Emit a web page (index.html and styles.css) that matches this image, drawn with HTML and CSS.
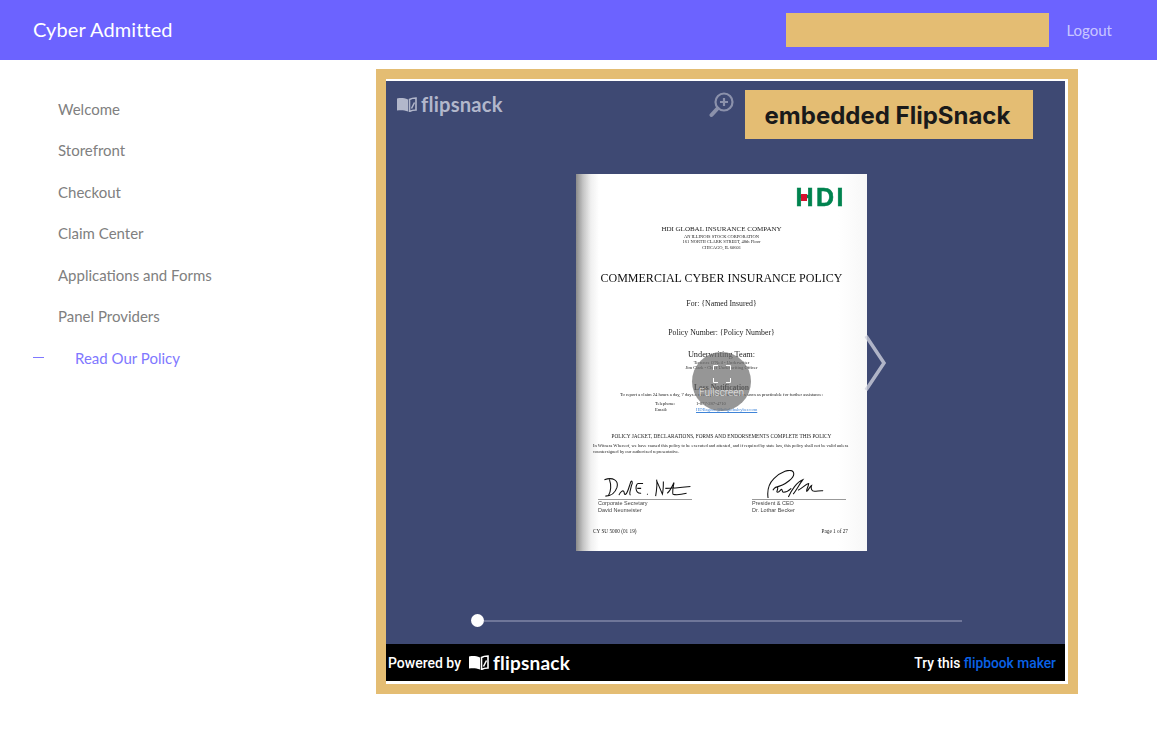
FILE: index.html
```html
<!DOCTYPE html>
<html lang="en">
<head>
<meta charset="utf-8">
<title>Cyber Admitted</title>
<link rel="stylesheet" href="styles.css">
</head>
<body>
<header class="topbar">
  <div class="brand">Cyber Admitted</div>
  <div class="topbar-right">
    <div class="redacted"></div>
    <a class="logout">Logout</a>
  </div>
</header>
<div class="layout">
  <nav class="sidebar">
    <a class="nav-item">Welcome</a>
    <a class="nav-item">Storefront</a>
    <a class="nav-item">Checkout</a>
    <a class="nav-item">Claim Center</a>
    <a class="nav-item">Applications and Forms</a>
    <a class="nav-item">Panel Providers</a>
    <a class="nav-item active"><span class="dash"></span>Read Our Policy</a>
  </nav>
  <main class="frame">
    <div class="frame-inner">
      <div class="viewer">
        <div class="stage">
          <div class="toolbar">
            <div class="fs-logo muted">
              <svg class="book" viewBox="0 0 20 15"><path class="book-left" d="M0 1.500C4 .8 7 1 11 2.500V14.500C7 13 4 13 0 13.500z"/><path class="book-right" d="M12.500 2.500c2-1.300 4-1.500 6.500-1.500V13c-2.500 0-4.500.3-6.500 1.500z"/><path class="book-pen" d="M14.500 11.500l3-6"/></svg>
              <span class="fs-word top">flipsnack</span>
            </div>
            <svg class="zoom-icon" viewBox="0 0 26 26"><circle cx="15" cy="10" r="8.500"/><path d="M15 6v8M11 10h8"/><path class="zoom-handle" d="M8.500 16.500L2.500 23"/></svg>
          </div>
          <article class="page">
            <div class="hdi"><span class="hdi-h">H<i></i></span><span>DI</span></div>
            <p class="co">HDI GLOBAL INSURANCE COMPANY</p>
            <p class="sub">AN ILLINOIS STOCK CORPORATION</p>
            <p class="sub">161 NORTH CLARK STREET, 48th Floor</p>
            <p class="sub">CHICAGO, IL 60601</p>
            <h1 class="title">COMMERCIAL CYBER INSURANCE POLICY</h1>
            <p class="field for">For: {Named Insured}</p>
            <p class="field num">Policy Number: {Policy Number}</p>
            <p class="head uw">Underwriting Team:</p>
            <p class="small">Terrence O'Neil - Underwriter</p>
            <p class="small">Jim Clark - Chief Underwriting Officer</p>
            <p class="head loss">Loss Notification</p>
            <p class="small">To report a claim 24 hours a day, 7 days a week, please contact us as soon as practicable for further assistance:</p>
            <div class="contact first"><span>Telephone:</span><span>1-877-287-4710</span></div>
            <div class="contact"><span>Email:</span><span class="mail">HDIlagoon@hdiglobalcyber.com</span></div>
            <p class="jacket">POLICY JACKET, DECLARATIONS, FORMS AND ENDORSEMENTS COMPLETE THIS POLICY</p>
            <p class="witness">In Witness Whereof, we have caused this policy to be executed and attested, and if required by state law, this policy shall not be valid unless countersigned by our authorized representative.</p>
            <div class="signs">
              <div class="sign">
                <svg class="sig" viewBox="0 0 94 30"><path d="M10 9c2 6 2 13-1 18M5 10c9-3 15 1 13 8-2 6-7 9-12 9M20 26c2-4 4-5 5-4s0 4 2 3 3-6 5-12c1-3 3-1 1 3-1 5-3 9-1 10M40 14c-3 0-4 11 3 10M39 19h4M40 14h5M49 25h1M59 10c1 5 0 11-1 17M59 11l6 14c1-4 1-9 1-13M70 24c3-2 5-7 7-11-1 5-2 10-1 12 3 1 10 0 14-1M68 19c8 0 17-1 26-2"/></svg>
                <div class="sign-line">Corporate Secretary</div>
                <div class="sign-line">David Neumeister</div>
              </div>
              <div class="sign">
                <svg class="sig" viewBox="0 0 94 30"><path d="M15 29c-1-7 0-14 6-20 7-7 17-11 20-7 3 5-8 14-19 16M20 21c2-4 5-4 5-2s-2 4 0 4 3-3 4-3 0 3 2 3 6-2 8-4M36 28c3-7 9-16 15-18-3 4-7 11-10 15M46 21c4-2 9-7 11-7 0 3-3 7-2 8 2-1 3-5 5-6-1 3 0 6 3 6s6-1 9-.5"/></svg>
                <div class="sign-line">President &amp; CEO</div>
                <div class="sign-line">Dr. Lothar Becker</div>
              </div>
            </div>
            <div class="page-foot"><span>CY SU 5000 (01 19)</span><span>Page 1 of 27</span></div>
          </article>
          <div class="slider"><span class="knob"></span><span class="track"></span></div>
          <div class="fullscreen">
            <svg class="fs-corners" viewBox="0 0 18 18"><path d="M.5 5V.5H5M13 .5h4.500V5M.5 13v4.500H5M13 17.500h4.500V13"/></svg>
            <span class="fs-label">Fullscreen</span>
          </div>
          <svg class="next" viewBox="0 0 24 58"><path d="M2 2l18 27L2 56"/></svg>
          <div class="note">embedded FlipSnack</div>
        </div>
        <footer class="powered">
          <div class="powered-left">
            <span>Powered by</span>
            <div class="fs-logo">
              <svg class="book" viewBox="0 0 20 15"><path class="book-left" d="M0 1.500C4 .8 7 1 11 2.500V14.500C7 13 4 13 0 13.500z"/><path class="book-right" d="M12.500 2.500c2-1.300 4-1.500 6.500-1.500V13c-2.500 0-4.500.3-6.500 1.500z"/><path class="book-pen" d="M14.500 11.500l3-6"/></svg>
              <span class="fs-word">flipsnack</span>
            </div>
          </div>
          <div class="try">Try this <a class="maker">flipbook maker</a></div>
        </footer>
      </div>
    </div>
  </main>
</div>
</body>
</html>
```
FILE: styles.css
```css
* { box-sizing: border-box; }
html, body { margin: 0; padding: 0; }
body { font-family: Lato, "Open Sans", sans-serif; background: #fff; height: 741px; overflow: hidden; }
p, h1 { margin: 0; }

.topbar { height: 60px; background: #6c63ff; display: flex; align-items: center; justify-content: space-between; padding: 0 45px 0 33px; }
.brand { font-size: 20px; letter-spacing: .1px; color: #fff; padding-bottom: 2px; }
.topbar-right { display: flex; align-items: center; gap: 17px; }
.redacted { width: 263px; height: 34px; background: #e4bd73; }
.logout { font-size: 15px; color: rgba(255,255,255,.65); padding-bottom: 1px; }

.layout { display: flex; align-items: flex-start; }
.sidebar { width: 376px; padding: 28px 0 0 33px; display: flex; flex-direction: column; flex: none; }
.nav-item { height: 41.500px; display: flex; align-items: center; padding-left: 25px; font-size: 15px; color: #808080; }
.nav-item.active { padding-left: 0; color: #7f78ff; }
.dash { width: 11px; height: 1px; background: #7f78ff; margin-right: 31px; }

.frame { margin-top: 9px; width: 702px; height: 625px; border: 10px solid #e4bd73; background: #fff; }
.frame-inner { padding-top: 2px; height: 100%; }
.viewer { width: 679px; height: 600px; display: flex; flex-direction: column; background: #3e4973; font-family: Roboto, "Liberation Sans", sans-serif; }
.stage { position: relative; height: 563px; flex: none; }
.toolbar { height: 93px; display: flex; align-items: flex-start; padding: 11px 0 0 11px; }
.fs-logo { display: flex; align-items: center; gap: 4px; color: #fff; }
.fs-logo.muted { color: #b2b7cb; }
.book { width: 20px; height: 15px; }
.book-left { fill: currentColor; }
.book-right { fill: none; stroke: currentColor; stroke-width: 1.600; }
.book-pen { fill: none; stroke: currentColor; stroke-width: 1.600; }
.fs-word { font-family: Lato, sans-serif; font-weight: 700; font-size: 19px; line-height: 24px; letter-spacing: .2px; }
.fs-word.top { font-size: 20.200px; }
.zoom-icon { width: 26px; height: 26px; margin: 0 0 0 206px; fill: none; stroke: #8b91ab; stroke-width: 2.200; }
.zoom-handle { stroke-width: 4; stroke-linecap: round; }

.page { width: 291px; height: 377px; margin: 0 0 0 190px; padding-top: 14px; text-align: center; font-family: "Liberation Serif", serif; color: #1c1c1c; filter: blur(.2px);
  background: linear-gradient(90deg, #8a8a8a 0, #c4c4c4 7px, #f0f0f0 15px, #fff 23px, #fff 90%, #f7f7f7 100%); }
.hdi { height: 18px; margin-right: 21px; display: flex; justify-content: flex-end; font-family: "Liberation Sans", sans-serif; font-weight: 700; font-size: 25px; line-height: 18px; color: #00834f; letter-spacing: 2.500px; -webkit-text-stroke: .5px #00834f; }
.hdi-h { position: relative; }
.hdi-h i { position: absolute; left: 6px; top: 6px; width: 6px; height: 7px; background: #d6112e; }
.co { margin-top: 19px; font-size: 7px; line-height: 8px; }
.sub { font-size: 4.500px; line-height: 5.500px; }
.co + .sub { margin-top: .5px; }
.title { margin-top: 20px; font-size: 12px; line-height: 16px; font-weight: 400; color: #111; }
.field { font-size: 7.800px; line-height: 10px; }
.for { margin-top: 13px; }
.num { margin-top: 19px; }
.head { font-size: 8.300px; }
.uw { margin-top: 12px; line-height: 10px; }
.small { font-size: 4.600px; line-height: 5px; }
.loss { margin-top: 14px; line-height: 8px; font-size: 7.600px; font-weight: 700; }
.contact { display: flex; justify-content: flex-start; padding-left: 79px; font-size: 4.600px; line-height: 5.500px; text-align: left; }
.contact span:first-child { width: 41px; }
.contact.first { margin-top: 4px; }
.mail { color: #3f84d8; text-decoration: underline; }
.jacket { margin-top: 20.500px; font-size: 5.260px; line-height: 7px; }
.witness { margin: 3.500px 12px 0 17px; font-size: 4.550px; line-height: 5.500px; text-align: left; }
.signs { margin: 16px 0 0 22px; display: flex; gap: 60px; text-align: left; }
.sign { width: 94px; font-family: "Liberation Sans", sans-serif; }
.sig { display: block; width: 94px; height: 29px; fill: none; stroke: #111; stroke-width: 1.100; border-bottom: 1px solid #999; box-sizing: content-box; }
.sign-line { font-size: 5.500px; line-height: 6.500px; color: #444; }
.page-foot { margin-top: 15px; padding: 0 19px 0 17px; display: flex; justify-content: space-between; font-size: 5.250px; line-height: 6px; }

.slider { margin: 63px 0 0 85px; width: 491px; height: 13px; display: flex; align-items: center; gap: 0; }
.knob { width: 13px; height: 13px; border-radius: 50%; background: #fff; flex: none; }
.track { flex: 1; height: 2px; background: #6f7699; }

.fullscreen { position: absolute; left: 306px; top: 271px; width: 59px; height: 59px; border-radius: 50%; background: rgba(110,110,110,.72); color: rgba(255,255,255,.8); display: flex; flex-direction: column; align-items: center; padding-top: 13px; }
.fs-corners { width: 18px; height: 18px; fill: none; stroke: #fff; stroke-width: 1; }
.fs-label { font-size: 10px; font-weight: 300; line-height: 12px; margin-top: 4px; }
.next { position: absolute; left: 478px; top: 253px; width: 24px; height: 58px; fill: none; stroke: rgba(205,208,220,.8); stroke-width: 3.500; }
.note { position: absolute; left: 359px; top: 9px; width: 288px; height: 49px; padding: 1px 3px 0 0; background: #e4bd73; color: #1a1a1a; font-family: Inter, sans-serif; font-weight: 700; font-size: 24px; display: flex; align-items: center; justify-content: center; }

.powered { height: 37px; background: #000; color: #fff; display: flex; align-items: center; justify-content: space-between; padding: 0 9px 0 2px; font-size: 14px; font-weight: 500; }
.powered-left { display: flex; align-items: center; gap: 8px; }
.try { font-size: 13.800px; }
.maker { color: #0a62e6; }
```
